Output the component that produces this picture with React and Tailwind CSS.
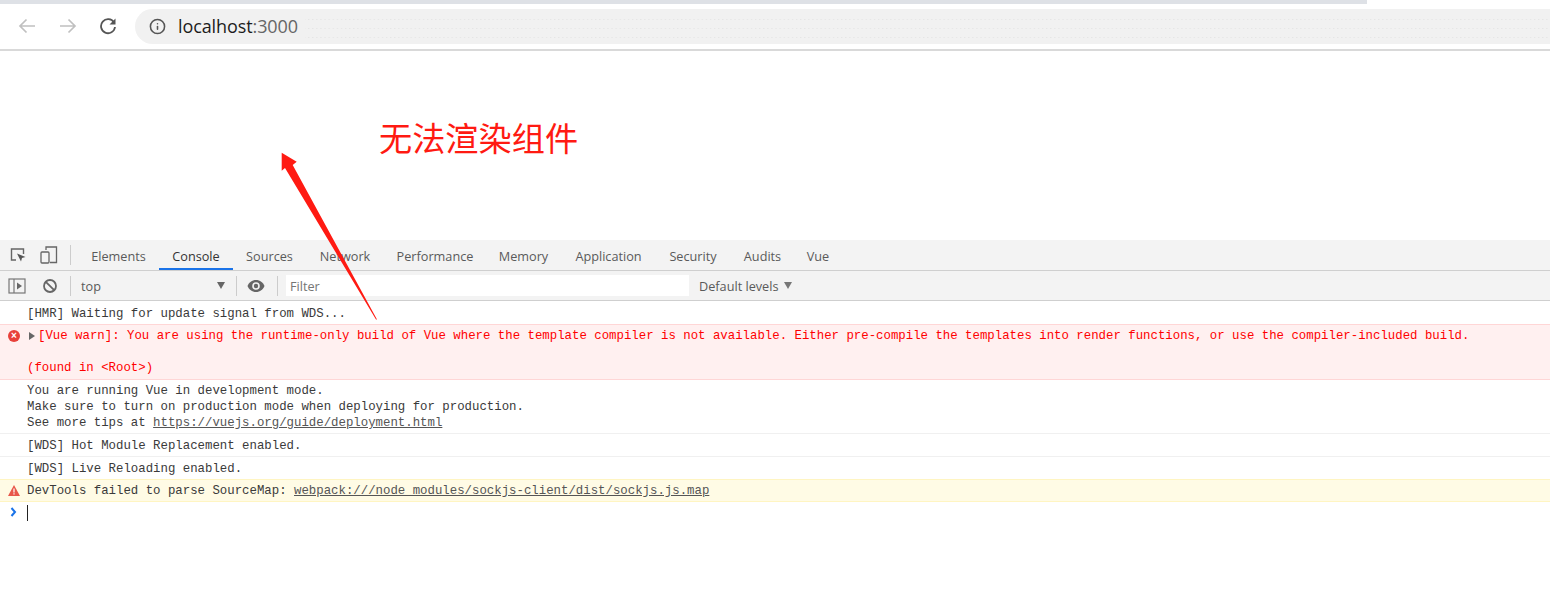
import { Info } from "lucide-react";

const tabs = [
  { name: "Elements", w: "w-[81px]" },
  { name: "Console", w: "w-[74px]", active: true },
  { name: "Sources", w: "w-[73px]" },
  { name: "Network", w: "w-[78px]" },
  { name: "Performance", w: "w-[102px]" },
  { name: "Memory", w: "w-[75px]" },
  { name: "Application", w: "w-[95px]" },
  { name: "Security", w: "w-[74px]" },
  { name: "Audits", w: "w-[65px]" },
  { name: "Vue", w: "w-[46px]" },
];

const ui = "font-['Open_Sans','Noto_Sans',sans-serif]";

function Dots() {
  return (
    <svg className="absolute inset-0 h-full w-full" aria-hidden="true">
      <defs>
        <pattern id="dots" width="4.1" height="9" patternUnits="userSpaceOnUse" y="1">
          <rect x="1" y="0" width="1" height="1" fill="#e2e2e2" />
        </pattern>
      </defs>
      <rect x="170" y="9" width="1245" height="21" fill="url(#dots)" />
    </svg>
  );
}

function Row({ children, className = "" }) {
  return <div className={`border-b border-[#f0f0f0] pl-[27px] ${className}`}>{children}</div>;
}

export default function App() {
  return (
    <div className={`relative h-[610px] w-[1550px] overflow-hidden bg-white ${ui}`}>
      <div className="h-[4px] w-[1367px] bg-[#dee1e6]" />

      {/* browser toolbar */}
      <div className="flex h-[47px] items-center border-b-2 border-[#d9d9d9] pb-[1px]">
        <div className="flex w-[135px] items-center">
          <svg width="18" height="16" viewBox="0 0 18 16" className="ml-[18px]" fill="none" stroke="#c0c0c0" strokeWidth="1.7">
            <path d="M17 8H2M8.5 1.5 2 8l6.5 6.5" />
          </svg>
          <svg width="18" height="16" viewBox="0 0 18 16" className="ml-[23px]" fill="none" stroke="#c0c0c0" strokeWidth="1.7">
            <path d="M1 8h15M9.500 1.500 16 8l-6.500 6.500" />
          </svg>
          <svg width="18" height="18" viewBox="0 0 18 18" className="ml-[22px]" fill="none">
            <path d="M15 5.500A7 7 0 1 0 16 10" stroke="#555555" strokeWidth="1.8" />
            <path d="M16.500 1.500v6h-6z" fill="#555555" />
          </svg>
        </div>
        <div className="relative flex h-[35px] flex-1 items-center rounded-l-[18px] bg-[#f1f1f1] pl-[14px]">
          <Dots />
          <Info size={17} color="#555555" strokeWidth={2.2} className="relative" />
          <span className="relative ml-[12px] text-[18px] tracking-[-0.1px] text-[#1c1c1c]">
            localhost<span className="text-[#666666]">:3000</span>
          </span>
        </div>
      </div>

      {/* empty page */}
      <div className="h-[189px]" />

      {/* devtools tabs */}
      <div className="flex h-[31px] items-center border-b border-[#cfcfcf] bg-[#f3f3f3]">
        <div className="flex w-[71px] items-center">
          <svg width="18" height="18" viewBox="0 0 18 18" className="ml-[9px]" fill="none">
            <path d="M7 14H2.500V3h12v5" stroke="#666666" strokeWidth="1.4" />
            <path d="M8 7.500 16.500 11l-3.500 1 -1 3.500z" fill="#555555" />
          </svg>
          <svg width="18" height="18" viewBox="0 0 18 18" className="ml-[13px]" fill="none" stroke="#666666" strokeWidth="1.3">
            <path d="M6 4V1h10.500v15.500H10" />
            <rect x="1" y="6" width="8" height="11" rx="1" />
          </svg>
          <div className="ml-[12px] h-[20px] w-px bg-[#cccccc]" />
        </div>
        <div className="ml-[7px] flex h-full">
          {tabs.map((t) => (
            <div
              key={t.name}
              className={`flex items-center justify-center text-[12.7px] ${t.w} ${
                t.active ? "border-b-2 border-[#1a73e8] pt-[6px] text-[#333333]" : "pt-[4px] text-[#5a5a5a]"
              }`}
            >
              {t.name}
            </div>
          ))}
        </div>
      </div>

      {/* console toolbar */}
      <div className="flex h-[30px] items-center border-b border-[#cfcfcf] bg-[#f3f3f3]">
        <svg width="18" height="16" viewBox="0 0 18 16" className="ml-[8px]" fill="none">
          <rect x="1" y="1" width="16" height="14" stroke="#777777" strokeWidth="1.2" />
          <path d="M6 1v14" stroke="#777777" strokeWidth="1.2" />
          <path d="M9 4.500 14 8l-5 3.500z" fill="#666666" />
        </svg>
        <svg width="16" height="16" viewBox="0 0 16 16" className="ml-[16px]" fill="none" stroke="#666666" strokeWidth="1.8">
          <circle cx="8" cy="8" r="6" />
          <path d="M3.800 3.800l8.400 8.400" />
        </svg>
        <div className="ml-[12px] h-[20px] w-px bg-[#cccccc]" />
        <span className="ml-[10px] w-[136px] pt-[2px] text-[12.7px] text-[#5a5a5a]">top</span>
        <div className="h-0 w-0 border-x-[4px] border-t-[7px] border-x-transparent border-t-[#666666]" />
        <div className="ml-[11px] h-[20px] w-px bg-[#cccccc]" />
        <svg width="18" height="12" viewBox="0 0 18 12" className="ml-[10px]">
          <path d="M9 0C5 0 2 2.500 0.500 6 2 9.500 5 12 9 12s7-2.500 8.500-6C16 2.500 13 0 9 0z" fill="#666666" />
          <circle cx="9" cy="6" r="3.800" fill="#f3f3f3" />
          <circle cx="9" cy="6" r="2.200" fill="#666666" />
        </svg>
        <div className="ml-[12px] h-[20px] w-px bg-[#cccccc]" />
        <div className="ml-[8px] flex h-[21px] w-[403px] items-center bg-white pt-[2px] pl-[4px] text-[12.7px] text-[#757575]">
          Filter
        </div>
        <span className="ml-[10px] pt-[2px] text-[12.7px] text-[#5a5a5a]">Default levels</span>
        <div className="ml-[5px] h-0 w-0 border-x-[4px] border-t-[7px] border-x-transparent border-t-[#777777]" />
      </div>

      {/* console messages */}
      <div className="font-['Liberation_Mono',monospace] text-[12.37px] leading-[16px] text-[#3a3a3a]">
        <Row className="h-[23px] border-b-0 pt-[5px]">[HMR] Waiting for update signal from WDS...</Row>

        <div className="relative h-[56px] border-y border-[#ffd6d6] bg-[#fff0f0] pt-[3px] pl-[27px] text-[#ff0000]">
          <div className="absolute top-[5px] left-[8px] flex h-[12px] w-[12px] items-center justify-center rounded-full bg-[#e8413a] font-['Liberation_Sans',sans-serif] text-[10px] leading-none font-bold text-white">
            ×
          </div>
          <div className="absolute top-[7px] left-[29px] h-0 w-0 border-y-[4px] border-l-[6px] border-y-transparent border-l-[#666666]" />
          <div className="pl-[11px]">
            [Vue warn]: You are using the runtime-only build of Vue where the template compiler is not available. Either pre-compile the templates into render functions, or use the compiler-included build.
          </div>
          <div className="mt-[16px]">(found in &lt;Root&gt;)</div>
        </div>

        <Row className="h-[54px] pt-[3px]">
          <div>You are running Vue in development mode.</div>
          <div>Make sure to turn on production mode when deploying for production.</div>
          <div>
            See more tips at <span className="text-[#555555] underline">https://vuejs.org/guide/deployment.html</span>
          </div>
        </Row>
        <Row className="h-[23px] pt-[4px]">[WDS] Hot Module Replacement enabled.</Row>
        <Row className="h-[22px] border-b-0 pt-[4px]">[WDS] Live Reloading enabled.</Row>

        <div className="relative h-[23px] border-y border-[#fff5c2] bg-[#fffbe5] pt-[3px] pl-[27px]">
          <svg width="12" height="11" viewBox="0 0 12 11" className="absolute top-[5px] left-[8px]">
            <path d="M6 0 12 11H0z" fill="#e8574a" />
            <path d="M5.400 3.500h1.200v4H5.400zM5.400 8.300h1.200v1.200H5.400z" fill="#ffffff" />
          </svg>
          DevTools failed to parse SourceMap: <span className="text-[#555555] underline">webpack:///node_modules/sockjs-client/dist/sockjs.js.map</span>
        </div>

        <div className="relative h-[22px]">
          <svg width="7" height="10" viewBox="0 0 7 10" className="absolute top-[5px] left-[10px]" fill="none" stroke="#1a73e8" strokeWidth="2">
            <path d="M1.500 1 5 5 1.500 9" />
          </svg>
          <div className="absolute top-[3px] left-[27px] h-[16px] w-px bg-[#222222]" />
        </div>
      </div>

      {/* annotation drawn on top of the screenshot */}
      <div className="absolute top-[115px] left-[379px] font-['Noto_Sans_CJK_SC',sans-serif] text-[33.2px] leading-[44px] text-[#ff1a12]">
        无法渲染组件
      </div>
      <svg className="pointer-events-none absolute top-[150px] left-[278px]" width="102" height="172" viewBox="0 0 102 172">
        <path d="M3.700 2.700 18.700 11.700 14.700 15 99 169.500 98 169.500 7 18 3.700 20.700z" fill="#ff1a12" />
      </svg>
    </div>
  );
}
